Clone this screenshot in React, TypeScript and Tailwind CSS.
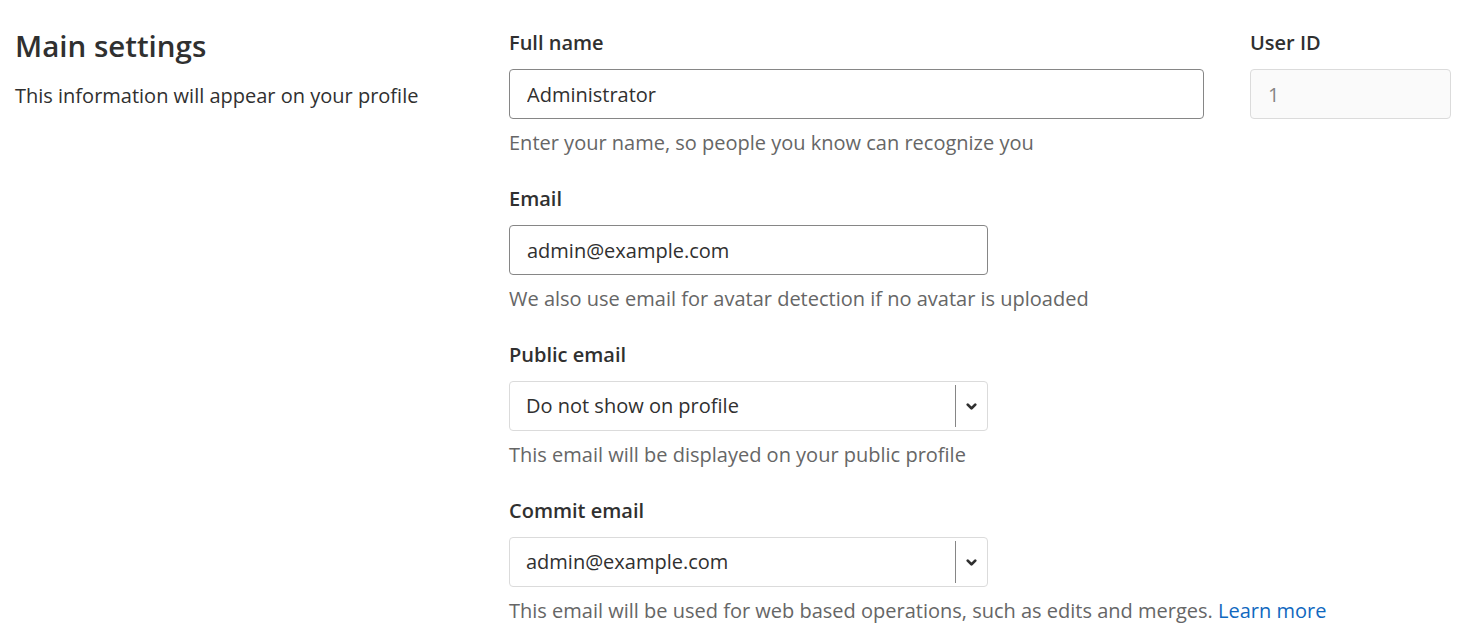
import { ChevronDown } from "lucide-react";

const font = { fontFamily: '"Open Sans", "Noto Sans", sans-serif' };

function Label({ children }: { children: React.ReactNode }) {
  return <label className="block text-[20px] leading-[28px] font-semibold text-[#303030]">{children}</label>;
}

function Help({ children }: { children: React.ReactNode }) {
  return <p className="mt-[10px] text-[20px] leading-[28px] text-[#666666]">{children}</p>;
}

function Select({ value }: { value: string }) {
  return (
    <div className="mt-[12px] flex h-[50px] w-[479px] items-stretch rounded-[4px] border border-[#dbdbdb] bg-white">
      <div className="flex flex-1 items-center pl-[16px] text-[20px] text-[#303030]">{value}</div>
      <div className="my-[3px] w-px bg-[#868686]" />
      <div className="flex w-[31px] items-center justify-center text-[#303030]">
        <ChevronDown size={15} strokeWidth={4.5} />
      </div>
    </div>
  );
}

export default function App() {
  return (
    <div className="flex min-h-screen bg-white pl-[15px] pr-[26px]" style={font}>
      {/* Left column */}
      <div className="w-[494px] shrink-0 pt-[27px]">
        <h2 className="text-[29.5px] leading-[38px] font-semibold text-[#303030]">Main settings</h2>
        <p className="mt-[17px] text-[20px] leading-[28px] text-[#303030]">This information will appear on your profile</p>
      </div>

      {/* Form */}
      <div className="flex-1 pt-[29px]">
        <div className="flex gap-[46px]">
          <div className="w-[695px]">
            <Label>Full name</Label>
            <input
              readOnly
              value="Administrator"
              className="mt-[12px] block h-[50px] w-full rounded-[4px] border border-[#868686] px-[17px] text-[20px] text-[#303030] outline-none"
              style={font}
            />
            <Help>Enter your name, so people you know can recognize you</Help>
          </div>
          <div className="w-[201px]">
            <Label>User ID</Label>
            <input
              readOnly
              value="1"
              className="mt-[12px] block h-[50px] w-full rounded-[4px] border border-[#dbdbdb] bg-[#fafafa] px-[17px] text-[20px] text-[#868686] outline-none"
              style={font}
            />
          </div>
        </div>

        <div className="mt-[28px]">
          <Label>Email</Label>
          <input
            readOnly
            value="admin@example.com"
            className="mt-[12px] block h-[50px] w-[479px] rounded-[4px] border border-[#868686] px-[17px] text-[20px] text-[#303030] outline-none"
            style={font}
          />
          <Help>We also use email for avatar detection if no avatar is uploaded</Help>
        </div>

        <div className="mt-[28px]">
          <Label>Public email</Label>
          <Select value="Do not show on profile" />
          <Help>This email will be displayed on your public profile</Help>
        </div>

        <div className="mt-[28px]">
          <Label>Commit email</Label>
          <Select value="admin@example.com" />
          <Help>
            This email will be used for web based operations, such as edits and merges.{" "}
            <a className="text-[#1068bf]">Learn more</a>
          </Help>
        </div>
      </div>
    </div>
  );
}
